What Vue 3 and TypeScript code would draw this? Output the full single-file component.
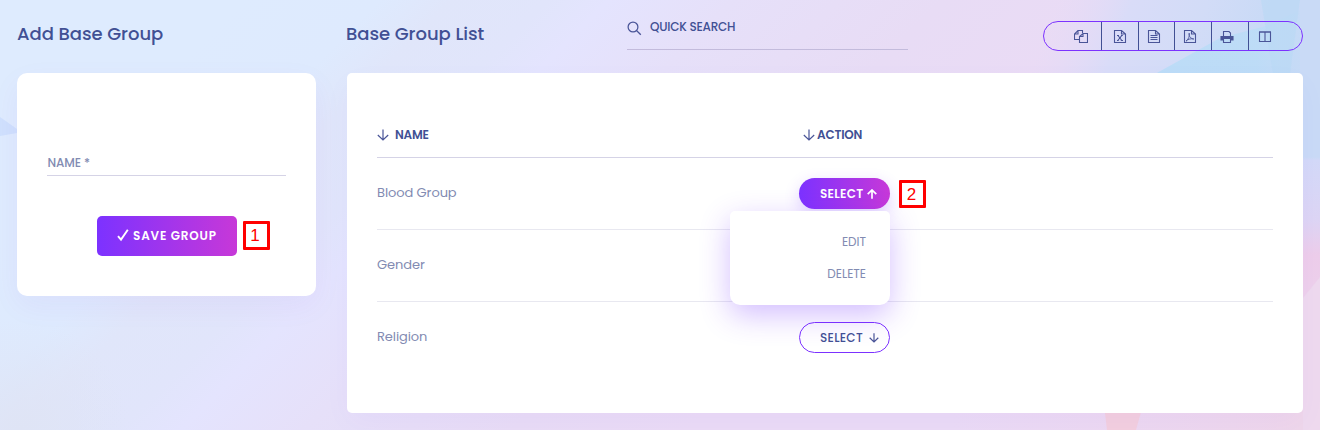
<script setup lang="ts">
import { ref } from 'vue'

interface Group { id: number; name: string }

const groups: Group[] = [
  { id: 1, name: 'Blood Group' },
  { id: 2, name: 'Gender' },
  { id: 3, name: 'Religion' },
]
const openId = ref<number>(1)
const exportTools: string[] = ['copy', 'excel', 'csv', 'pdf', 'print', 'columns']

function toggle(id: number): void {
  openId.value = openId.value === id ? 0 : id
}
</script>

<template>
  <div class="page">
    <svg class="backdrop" viewBox="0 0 1320 430" preserveAspectRatio="none" aria-hidden="true">
      <defs>
        <linearGradient id="base" gradientUnits="userSpaceOnUse" x1="180" y1="60" x2="620" y2="500">
          <stop offset="0" stop-color="#deebfe" />
          <stop offset=".16" stop-color="#deeafe" />
          <stop offset=".24" stop-color="#e0e6fa" />
          <stop offset=".35" stop-color="#e1e5fb" />
          <stop offset=".42" stop-color="#e4e4fe" />
          <stop offset=".56" stop-color="#e6e0f9" />
          <stop offset=".8" stop-color="#e8dcf5" />
          <stop offset="1" stop-color="#eadbf5" />
        </linearGradient>
        <radialGradient id="corner" gradientUnits="userSpaceOnUse" cx="20" cy="430" r="110">
          <stop offset="0" stop-color="#dfe4f5" />
          <stop offset="1" stop-color="#dfe4f5" stop-opacity="0" />
        </radialGradient>
        <linearGradient id="sky" gradientUnits="userSpaceOnUse" x1="1050" y1="20" x2="1240" y2="90">
          <stop offset="0" stop-color="#e4dbf7" stop-opacity="0" />
          <stop offset=".35" stop-color="#d9dcf8" />
          <stop offset=".7" stop-color="#d2dcf7" />
          <stop offset="1" stop-color="#c9daf6" />
        </linearGradient>
        <linearGradient id="wing" x1="0" y1="0" x2="1" y2="0">
          <stop offset="0" stop-color="#b8dcf7" />
          <stop offset=".7" stop-color="#bbdcf7" />
          <stop offset="1" stop-color="#bfdbf6" stop-opacity=".4" />
        </linearGradient>
        <linearGradient id="edge" x1="0" y1="0" x2="0" y2="1">
          <stop offset="0" stop-color="#c9daf6" />
          <stop offset=".22" stop-color="#c9daf6" />
          <stop offset=".23" stop-color="#d3d9f8" />
          <stop offset=".4" stop-color="#ddd5f4" />
          <stop offset=".5" stop-color="#edcdea" />
          <stop offset=".68" stop-color="#edd2ec" />
          <stop offset="1" stop-color="#eed9ec" />
        </linearGradient>
        <linearGradient id="floor" x1="0" y1="0" x2="1" y2="0">
          <stop offset="0" stop-color="#eed6ef" stop-opacity="0" />
          <stop offset="1" stop-color="#eed6ea" />
        </linearGradient>
      </defs>
      <rect width="1320" height="430" fill="url(#base)" />
      <path d="M0 300H140V430H0Z" fill="url(#corner)" />
      <path d="M0 117 17 129 17 133 0 136Z" fill="#cfe0fd" />
      <path d="M1020 0H1320V90H1020Z" fill="url(#sky)" />
      <path d="M1303 80H1320V430H1303Z" fill="url(#edge)" />
      <path d="M1155 74 1220 38 1266 26 1300 10V74Z" fill="url(#wing)" opacity=".85" />
      <path d="M1261 0H1300L1290 74H1273Z" fill="#b9d8f5" opacity=".6" />
      <path d="M1303 298 1320 277V430H1303Z" fill="#eed9ee" />
      <path d="M950 405H1303V430H950Z" fill="url(#floor)" />
      <path d="M1104 405H1143L1136 430H1107Z" fill="#f2cfde" />
    </svg>

    <section class="add">
      <header class="head"><h3 class="title t-add">Add Base Group</h3></header>
      <form class="card form-card" @submit.prevent>
        <label class="field"><span>NAME *</span></label>
        <div class="save-wrap">
          <button class="save" type="submit">
            <svg width="12" height="14" viewBox="0 0 12 14"><path d="M1 8.2 4 11.6 10.8 1.8" fill="none" stroke="#fff" stroke-width="1.9" /></svg>
            <span>SAVE GROUP</span>
          </button>
          <span class="mark mark-one">1</span>
        </div>
      </form>
    </section>

    <section class="list">
      <header class="head">
        <h3 class="title t-list">Base Group List</h3>
        <div class="search">
          <svg width="15" height="15" viewBox="0 0 15 15" fill="none" stroke="#4a5598" stroke-width="1.25"><circle cx="6" cy="6" r="4.9" /><path d="m9.5 9.5 4.3 4.3" /></svg>
          <span>QUICK SEARCH</span>
        </div>
        <div class="tools">
          <button v-for="tool in exportTools" :key="tool" :class="['tool', tool]" :aria-label="tool">
            <svg width="14" height="14" viewBox="0 0 14 14" fill="none" stroke="#4a5598" stroke-width="1.1">
              <template v-if="tool === 'copy'">
                <path d="M5.5 9.5H.5V4L4 .5H8.5V3M4 .5V4H.5" />
                <path d="M5.5 12.5V6.5L9 3.5H13.5V12.5ZM9 3.5V6.5H5.5" />
              </template>
              <template v-else-if="tool === 'print'">
                <path d="M3.5 6V1.5H9L10.5 3V6" />
                <path d="M1 6.5H13V10H11V8.5H3V10H1Z" fill="#4a5598" />
                <path d="M3.5 9V12.5H10.5V9" />
              </template>
              <template v-else-if="tool === 'columns'">
                <path d="M1.5 2V11.5H12.5V2M7 2V11.5" /><path d="M1 2H13" stroke-width="1.6" />
              </template>
              <template v-else>
                <path d="M1.5.5H8.5L12.5 4V12.5H1.5ZM8.5.5V4H12.5" />
                <path v-if="tool === 'excel'" d="M4 5.5H6M8 5.5H9.8M4 10.5H5.8M7.8 10.5H10M5 5.5 8.8 10.5M8.8 5.5 4.8 10.5" />
                <path v-else-if="tool === 'csv'" d="M3.5 5.5H10.5M3.5 7.5H10.5M3.5 9.5H10.5" />
                <path v-else stroke-width=".9" d="M6.2 3.2C5.5 6.5 8 8.7 10.8 9 7.8 8.2 4.2 9.4 3 11.2 5.2 9.8 7 6 6.2 3.2Z" />
              </template>
            </svg>
          </button>
        </div>
      </header>

      <div class="card list-card">
        <div class="row thead">
          <div class="cell">
            <svg class="arrow" width="12" height="12" viewBox="0 0 12 12"><path d="M6 .5V11M.8 6 6 11 11.2 6" /></svg>
            <span class="th-name">NAME</span>
          </div>
          <div class="cell action-head">
            <svg class="arrow" width="12" height="12" viewBox="0 0 12 12"><path d="M6 .5V11M.8 6 6 11 11.2 6" /></svg>
            <span class="th-action">ACTION</span>
          </div>
        </div>
        <div v-for="group in groups" :key="group.id" class="row">
          <div class="cell name">{{ group.name }}</div>
          <div class="cell action">
            <div :class="['dropdown', { covered: group.id === openId + 1 && openId > 0 }]">
              <button :class="['select', { open: openId === group.id }]" @click="toggle(group.id)">
                <span>SELECT</span>
                <svg v-if="openId === group.id" width="10" height="10" viewBox="0 0 10 10"><path d="M5 9.8V1M.7 5.2 5 1 9.3 5.2" /></svg>
                <svg v-else width="10" height="10" viewBox="0 0 10 10"><path d="M5 .3V9M.7 4.8 5 9 9.3 4.8" /></svg>
              </button>
              <div v-if="openId === group.id" class="menu">
                <a>EDIT</a>
                <a>DELETE</a>
              </div>
            </div>
            <span v-if="group.id === 1" class="mark mark-two">2</span>
          </div>
        </div>
      </div>
    </section>
  </div>
</template>

<style>
body { margin: 0; overflow: hidden; }
</style>

<style scoped>
* { box-sizing: border-box; }
.page {
  position: relative;
  width: 1320px;
  height: 430px;
  overflow: hidden;
  display: flex;
  gap: 31px;
  padding: 0 17px;
  font-family: Poppins, Inter, "Open Sans", sans-serif;
  font-size: 12px;
  line-height: 18px;
  color: #415094;
}
.backdrop { position: absolute; inset: 0; width: 100%; height: 100%; }
.add { position: relative; width: 299px; }
.list { position: relative; width: 956px; }
.head { height: 73px; display: flex; align-items: flex-start; }
.title { margin: 20px 0 0; font-size: 18px; line-height: 27px; font-weight: 500; white-space: nowrap; letter-spacing: -.04px; }
.t-list { width: 281px; margin-left: -1px; }
.card { background: #fff; }
.form-card { height: 223px; border-radius: 10px; padding: 80px 30px 0; box-shadow: 0 10px 30px rgba(130, 39, 225, .05); }
.list-card { height: 340px; border-radius: 5px; padding: 30px; box-shadow: 0 10px 30px rgba(108, 39, 255, .03); }
.field { display: block; height: 23px; padding: 1px 0 0 .5px; border-bottom: 1px solid #d5d3e6; color: #828bb2; font-weight: 500; letter-spacing: -.1px; }
.save-wrap { display: flex; margin: 40px 0 0 50px; gap: 6px; }
button { font: inherit; color: inherit; cursor: pointer; }
.save {
  width: 140px; height: 40px; border: 0; border-radius: 5px; padding: 0 0 0 20px;
  display: flex; align-items: center; gap: 4px;
  background: linear-gradient(90deg, #7c32ff, #c738d8);
  color: #fff; font-weight: 600; letter-spacing: .82px; white-space: nowrap;
}
.save svg { margin-top: -3px; }
.mark {
  display: flex; align-items: center; justify-content: center;
  width: 27px; height: 29px; border: 3px solid #f00; border-radius: 1px; background: #fff;
  color: #f00; font: 17px/21px "Liberation Sans", Arial, sans-serif;
}
.mark-one { margin-top: 5px; padding-right: 3px; }
.mark-two { margin: 2px 0 0 9px; height: 28px; padding-right: 2px; }
.search { width: 281px; height: 50px; border-bottom: 1px solid #c3bbdc; display: flex; gap: 8px; padding: 18px 0 0; font-weight: 500; }
.search svg { margin-top: 3px; }
.search span { letter-spacing: -.23px; }
.tools { margin: 21px 0 0 135px; width: 260px; height: 30px; border: 1px solid #7c32ff; border-radius: 15px; display: flex; overflow: hidden; }
.tool { flex: none; width: 37px; height: 28px; padding: 1px 0 0; border: 0; border-right: 1px solid #415094; background: none; display: flex; align-items: center; justify-content: center; }
.tool.copy { width: 58px; padding-left: 17px; }
.tool.csv { width: 36px; padding-right: 5px; }
.tool.pdf { padding-right: 6px; }
.tool.print { padding-right: 6px; }
.tool.columns { width: 53px; border-right: 0; padding-right: 21px; }
.row { display: grid; grid-template-columns: 422px 1fr; height: 72px; border-bottom: 1px solid #e8e8f0; }
.row:last-child { border-bottom: 0; }
.thead { height: 55px; border-color: #d5d3e6; font-weight: 600; letter-spacing: -.2px; }
.cell { display: flex; align-items: flex-start; }
.thead .cell { padding-top: 23px; }
.thead .action-head { padding-left: 4px; }
.arrow { margin-top: 3px; fill: none; stroke: #4a5598; stroke-width: 1.2; }
.th-name { margin-left: 6px; }
.th-action { margin-left: 2px; }
.name { padding-top: 25px; font-size: 13px; line-height: 20px; color: #828bb2; font-weight: 400; letter-spacing: -.08px; }
.action { padding-top: 20px; }
.dropdown { position: relative; }
.covered { visibility: hidden; }
.select {
  width: 91px; height: 31px; border: 1px solid #7c32ff; border-radius: 16px; padding: 0 0 0 20px;
  display: flex; align-items: center; background: #fff; font-weight: 500; letter-spacing: .3px;
}
.select span { width: 49px; text-align: left; }
.select svg { fill: none; stroke: #4a5598; stroke-width: 1.2; }
.select.open { border: 0; padding-left: 21px; background: linear-gradient(90deg, #7c32ff, #c738d8); color: #fff; font-weight: 600; box-shadow: 0 5px 16px rgba(108, 39, 255, .2); }
.select.open span { width: 47px; }
.select.open svg { stroke: #fff; stroke-width: 1.7; }
.menu {
  position: absolute; z-index: 2; top: 33px; right: 0; width: 160px; height: 94px;
  padding: 15px 24px 0; border-radius: 5px 5px 10px 10px; background: #fff;
  box-shadow: 0 10px 30px rgba(108, 39, 255, .3);
  display: flex; flex-direction: column; align-items: flex-end;
  color: #828bb2; line-height: 32px;
}
</style>
